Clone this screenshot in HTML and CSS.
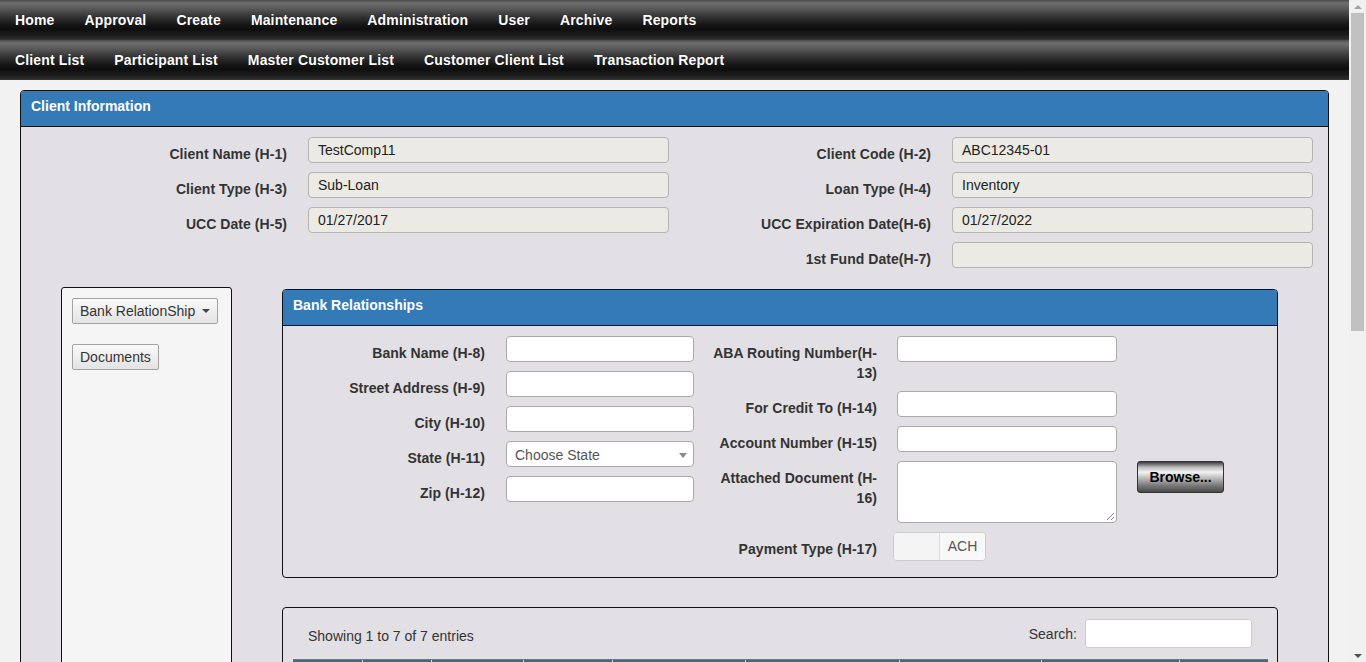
FILE: index.html
```html
<!DOCTYPE html>
<html lang="en">
<head>
<meta charset="utf-8">
<title>Client Information</title>
<link rel="stylesheet" href="styles.css">
</head>
<body>
<div class="page">
  <nav class="navbar">
    <a class="nav-item">Home</a>
    <a class="nav-item">Approval</a>
    <a class="nav-item">Create</a>
    <a class="nav-item">Maintenance</a>
    <a class="nav-item">Administration</a>
    <a class="nav-item">User</a>
    <a class="nav-item">Archive</a>
    <a class="nav-item">Reports</a>
  </nav>
  <nav class="navbar">
    <a class="nav-item">Client List</a>
    <a class="nav-item">Participant List</a>
    <a class="nav-item">Master Customer List</a>
    <a class="nav-item">Customer Client List</a>
    <a class="nav-item">Transaction Report</a>
  </nav>

  <main class="container">
    <section class="panel main-panel">
      <div class="panel-heading">Client Information</div>
      <div class="panel-body">
        <div class="info-grid">
          <label class="lbl">Client Name (H-1)</label>
          <div class="field disabled">TestComp11</div>
          <label class="lbl">Client Code (H-2)</label>
          <div class="field disabled">ABC12345-01</div>

          <label class="lbl">Client Type (H-3)</label>
          <div class="field disabled">Sub-Loan</div>
          <label class="lbl">Loan Type (H-4)</label>
          <div class="field disabled">Inventory</div>

          <label class="lbl">UCC Date (H-5)</label>
          <div class="field disabled">01/27/2017</div>
          <label class="lbl">UCC Expiration Date(H-6)</label>
          <div class="field disabled">01/27/2022</div>

          <div></div>
          <div></div>
          <label class="lbl">1st Fund Date(H-7)</label>
          <div class="field disabled"></div>
        </div>

        <div class="split">
          <aside class="sidebar">
            <button class="btn">Bank RelationShip <span class="caret"></span></button>
            <button class="btn">Documents</button>
          </aside>

          <div class="content">
            <section class="panel bank-panel">
              <div class="panel-heading">Bank Relationships</div>
              <div class="bank-body">
                <div class="bank-col left-col">
                  <div class="row">
                    <label class="lbl bl">Bank Name (H-8)</label>
                    <div class="field w188"></div>
                  </div>
                  <div class="row">
                    <label class="lbl bl">Street Address (H-9)</label>
                    <div class="field w188"></div>
                  </div>
                  <div class="row">
                    <label class="lbl bl">City (H-10)</label>
                    <div class="field w188"></div>
                  </div>
                  <div class="row">
                    <label class="lbl bl">State (H-11)</label>
                    <div class="field w188 select">Choose State<span class="select-caret"></span></div>
                  </div>
                  <div class="row">
                    <label class="lbl bl">Zip (H-12)</label>
                    <div class="field w188"></div>
                  </div>
                </div>
                <div class="bank-col right-col">
                  <div class="row">
                    <label class="lbl br">ABA Routing Number(H-<br>13)</label>
                    <div class="field w220"></div>
                  </div>
                  <div class="row">
                    <label class="lbl br">For Credit To (H-14)</label>
                    <div class="field w220"></div>
                  </div>
                  <div class="row">
                    <label class="lbl br">Account Number (H-15)</label>
                    <div class="field w220"></div>
                  </div>
                  <div class="row">
                    <label class="lbl br">Attached Document (H-<br>16)</label>
                    <div class="field w220 textarea"><span class="grip"></span></div>
                    <button class="browse">Browse...</button>
                  </div>
                  <div class="row">
                    <label class="lbl br">Payment Type (H-17)</label>
                    <div class="toggle">
                      <span class="toggle-off"></span>
                      <span class="toggle-on">ACH</span>
                    </div>
                  </div>
                </div>
              </div>
            </section>

            <section class="panel table-panel">
              <div class="table-top">
                <div class="table-info">Showing 1 to 7 of 7 entries</div>
                <div class="search">
                  <span>Search:</span>
                  <div class="search-input"></div>
                </div>
              </div>
              <table class="data-table">
                <thead>
                  <tr>
                    <th style="width:69px"></th>
                    <th style="width:69px"></th>
                    <th style="width:92px"></th>
                    <th style="width:89px"></th>
                    <th style="width:133px"></th>
                    <th style="width:154px"></th>
                    <th style="width:142px"></th>
                    <th style="width:138px"></th>
                    <th></th>
                  </tr>
                </thead>
              </table>
            </section>
          </div>
        </div>
      </div>
    </section>
  </main>
</div>
<div class="scrollbar">
  <div class="sb-btn up"></div>
  <div class="sb-thumb"></div>
  <div class="sb-space"></div>
  <div class="sb-btn down"></div>
</div>
</body>
</html>
```

FILE: styles.css
```css
* { box-sizing: border-box; }

html, body {
  margin: 0;
  height: 662px;
  overflow: hidden;
}

body {
  display: flex;
  font-family: "Liberation Sans", Arial, sans-serif;
  font-size: 14px;
  color: #333;
  background: #f2f2f2;
}

.page {
  flex: 1;
  min-width: 0;
  height: 662px;
  overflow: hidden;
  background: #f2f2f2;
}

/* nav bars */
.navbar {
  height: 40px;
  display: flex;
  align-items: center;
  background: linear-gradient(to bottom,
    #4a4a4a 0px, #6f6f6f 3px, #646464 6px, #4e4e4e 11px,
    #2e2e2e 18px, #151515 25px, #0e0e0e 29px, #1a1a1a 34px, #2a2a2a 39px, #3c3c3c 40px);
}

.nav-item {
  padding: 0 15px;
  color: #fff;
  font-weight: bold;
  font-size: 14px;
  line-height: 20px;
  letter-spacing: 0.15px;
  text-shadow: 0 0 1px rgba(0,0,0,0.6);
  white-space: nowrap;
}

/* container */
.container {
  padding: 10px 20px 0 20px;
}

.panel {
  border: 1px solid #111;
  border-radius: 4px;
  background: #e2e0e4;
}

.panel-heading {
  height: 36px;
  background: #337ab7;
  color: #fff;
  font-weight: bold;
  font-size: 14px;
  line-height: 20px;
  padding: 5px 10px 0 10px;
  border-bottom: 1px solid #111;
  border-radius: 3px 3px 0 0;
}

.panel-body {
  padding-top: 10px;
}

/* top info grid */
.info-grid {
  display: grid;
  grid-template-columns: 266px 361px 241px 361px;
  column-gap: 21px;
  row-gap: 9px;
  align-items: start;
}

.lbl {
  display: block;
  text-align: right;
  font-weight: bold;
  color: #333;
  padding-top: 7px;
  line-height: 20px;
  margin-bottom: -1px;
  letter-spacing: 0.05px;
  white-space: nowrap;
}

.field {
  height: 26px;
  border: 1px solid #aaa;
  border-radius: 4px;
  background: #fff;
  padding: 0 9px;
  line-height: 24px;
  color: #222;
  font-size: 14px;
}

.field.disabled {
  background: #ebeae4;
  border-color: #b4b4b0;
}

/* split */
.split {
  display: flex;
  align-items: flex-start;
  margin-top: 19px;
  padding: 0 50px 0 40px;
}

.sidebar {
  width: 171px;
  flex: none;
  height: 420px;
  background: #f5f5f5;
  border: 1px solid #111;
  border-radius: 3px 3px 0 0;
  padding: 10px 10px;
  display: flex;
  flex-direction: column;
  align-items: flex-start;
  gap: 20px;
}

.btn {
  font-family: "Liberation Sans", Arial, sans-serif;
  font-size: 14px;
  color: #333;
  height: 26px;
  padding: 0 7px;
  border: 1px solid #a3a3a3;
  border-radius: 2px;
  background: linear-gradient(to bottom, #fafafa, #e3e3e3);
  display: flex;
  align-items: center;
}

.caret {
  display: inline-block;
  width: 0;
  height: 0;
  margin-left: 7px;
  border-left: 4px solid transparent;
  border-right: 4px solid transparent;
  border-top: 4px solid #444;
}

.content {
  flex: 1;
  min-width: 0;
  margin-left: 50px;
  margin-top: 2px;
}

/* bank panel */
.bank-body {
  display: flex;
  padding: 10px 0 7px 0;
}

.bank-col {
  display: flex;
  flex-direction: column;
}

.left-col {
  width: 411px;
  margin-right: 17px;
}

.row {
  display: flex;
  align-items: flex-start;
  margin-bottom: 9px;
}

.bl { width: 202px; margin-right: 21px; flex: none; }
.br { width: 166px; margin-right: 20px; flex: none; }

.w188 { width: 188px; flex: none; }
.w220 { width: 220px; flex: none; }

.select {
  position: relative;
  color: #555;
  padding-left: 8px;
  line-height: 26px;
}

.select-caret {
  position: absolute;
  right: 6px;
  top: 11px;
  width: 0;
  height: 0;
  border-left: 4px solid transparent;
  border-right: 4px solid transparent;
  border-top: 5px solid #888;
}

.textarea {
  height: 62px;
  position: relative;
}

.grip {
  position: absolute;
  right: 2px;
  bottom: 2px;
  width: 7px;
  height: 7px;
  background: linear-gradient(135deg, transparent 45%, #888 45%, #888 55%, transparent 55%, transparent 75%, #888 75%, #888 85%, transparent 85%);
}

.browse {
  margin-left: 20px;
  width: 87px;
  height: 32px;
  font-family: "Liberation Sans", Arial, sans-serif;
  font-weight: bold;
  font-size: 14px;
  color: #000;
  border: 1px solid #333;
  border-radius: 3px;
  padding: 0 0 1px 0;
  background: linear-gradient(to bottom, #3c3c3c 0%, #bdbdbd 18%, #f2f2f2 34%, #b8b8b8 55%, #7a7a7a 78%, #4a4a4a 100%);
}

.toggle {
  display: flex;
  height: 29px;
  margin-left: -4px;
  border: 1px solid #ccc;
  border-radius: 4px;
  overflow: hidden;
  background: #f7f7f7;
}

.toggle-off {
  width: 46px;
  background: #f4f4f4;
  border-right: 1px solid #ddd;
}

.toggle-on {
  width: 45px;
  color: #555;
  text-align: center;
  line-height: 26px;
  background: #f8f8f8;
}

/* table panel */
.table-panel {
  margin-top: 29px;
  height: 200px;
}

.table-top {
  display: flex;
  justify-content: space-between;
  align-items: flex-start;
  padding: 11px 25px 0 25px;
}

.table-info {
  padding-top: 7px;
  line-height: 20px;
  color: #333;
}

.search {
  display: flex;
  align-items: center;
  gap: 8px;
  color: #333;
}

.search-input {
  width: 167px;
  height: 29px;
  background: #fff;
  border: 1px solid #ccc;
  border-radius: 3px;
}

.data-table {
  margin: 11px 9px 0 10px;
  width: calc(100% - 19px);
  border-collapse: collapse;
  table-layout: fixed;
}

.data-table th {
  height: 36px;
  background: #436880;
  border-top: 1px solid #5d7f94;
  border-left: 1px solid #d5dde2;
  padding: 0;
}

.data-table th:first-child { border-left: none; }

/* scrollbar */
.scrollbar {
  width: 17px;
  flex: none;
  height: 662px;
  background: #f1f1f1;
  display: flex;
  flex-direction: column;
  align-items: center;
}

.sb-btn {
  height: 13px;
  width: 17px;
  display: flex;
  align-items: center;
  justify-content: center;
}

.sb-btn.up::before {
  content: "";
  border-left: 4px solid transparent;
  border-right: 4px solid transparent;
  border-bottom: 4px solid #a3a3a3;
}

.sb-btn.down::before {
  content: "";
  border-left: 4px solid transparent;
  border-right: 4px solid transparent;
  border-top: 4px solid #505050;
}

.sb-thumb {
  width: 13px;
  height: 318px;
  background: #c1c1c1;
}

.sb-space { flex: 1; }
```
